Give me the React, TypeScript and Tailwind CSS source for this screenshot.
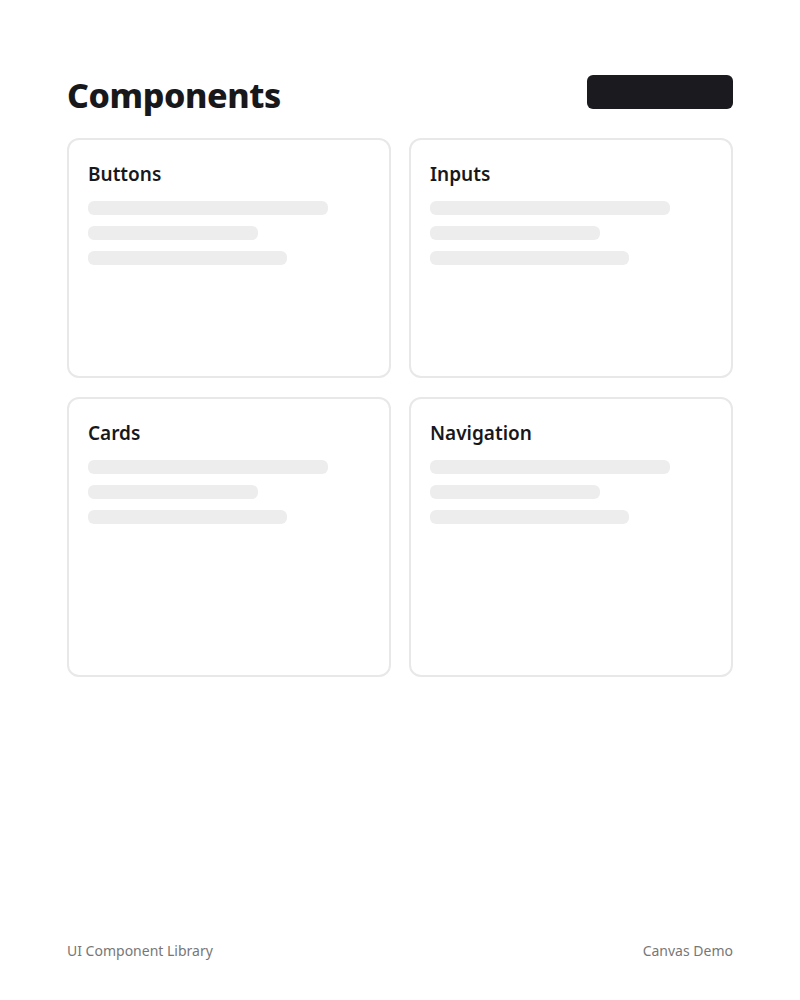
export default function App() {
  const cards = [
    { title: 'Buttons', h: 'h-[240px]' },
    { title: 'Inputs', h: 'h-[240px]' },
    { title: 'Cards', h: 'h-[280px]' },
    { title: 'Navigation', h: 'h-[280px]' },
  ];

  return (
    <div className="min-h-[1000px] bg-white flex flex-col font-['Noto_Sans',sans-serif] text-[#18181b]">
      <main className="w-[666px] mx-auto pt-[72px] flex-1">
        <header className="flex items-center justify-between mb-[20px]">
          <h1 className="text-[34px] leading-[46px] font-extrabold tracking-[-0.4px]">Components</h1>
          <button className="w-[146px] h-[34px] rounded-md bg-[#1a1a1f] mt-[-6px]" />
        </header>

        <div className="grid grid-cols-2 gap-x-[18px] gap-y-[19px]">
          {cards.map((card) => (
            <div key={card.title} className={`${card.h} border-2 border-[#e8e8e8] rounded-xl px-[19px] pt-[20px]`}>
              <h2 className="text-[19px] leading-[28px] font-semibold mb-[13px]">{card.title}</h2>
              <div className="flex flex-col gap-[11px]">
                <div className="h-[14px] w-[240px] rounded-md bg-[#ededed]" />
                <div className="h-[14px] w-[170px] rounded-md bg-[#ededed]" />
                <div className="h-[14px] w-[199px] rounded-md bg-[#ededed]" />
              </div>
            </div>
          ))}
        </div>
      </main>

      <footer className="w-[666px] mx-auto flex justify-between pb-[39px] text-[14px] text-[#777777]">
        <span>UI Component Library</span>
        <span>Canvas Demo</span>
      </footer>
    </div>
  );
}
